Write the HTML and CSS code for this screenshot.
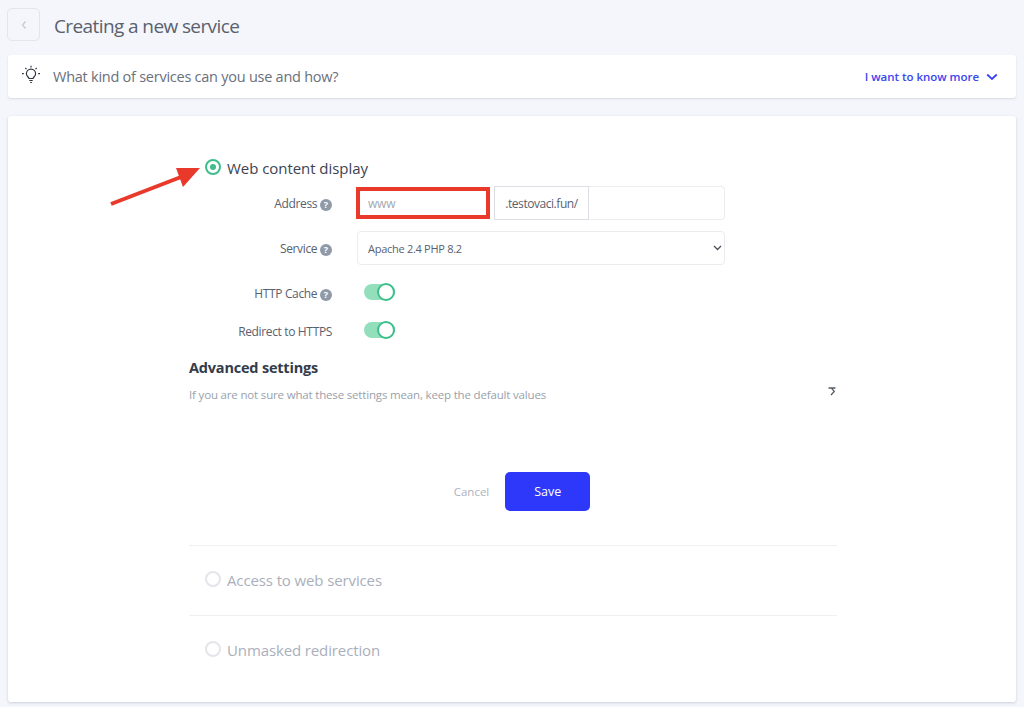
FILE: index.html
```html
<!DOCTYPE html>
<html lang="en">
<head>
<meta charset="utf-8">
<title>Creating a new service</title>
<link rel="stylesheet" href="styles.css">
</head>
<body>
<header class="page-head">
  <button class="back" aria-label="Back"><svg width="8" height="10" viewBox="0 0 8 10"><path d="M5.500 1.500 2.500 5l3 3.500" fill="none" stroke="#c3c8d2" stroke-width="1.2"/></svg></button>
  <h1>Creating a new service</h1>
</header>
<section class="info">
  <svg class="bulb" width="20" height="20" viewBox="0 0 20 20" fill="none" stroke="#2f353e" stroke-width="1.2"><path d="M8 13.500c-.2-1.300-2.600-2.200-2.600-4.800a4.600 4.600 0 0 1 9.200 0c0 2.600-2.400 3.500-2.600 4.800z"/><path d="M8.300 15.500h3.400M9.200 17.500h1.600M10 .8v1.700M2.800 8.700H1M19 8.700h-1.800M4.300 3l1.200 1.200M15.700 3l-1.200 1.200"/></svg>
  <span class="info-text">What kind of services can you use and how?</span>
  <a class="more">I want to know more<svg width="12" height="8" viewBox="0 0 12 8"><path d="M1.200 1.500 6 6l4.800-4.500" fill="none" stroke="#3a45f0" stroke-width="1.8"/></svg></a>
</section>
<main class="card">
  <div class="form-wrap">
    <div class="option active"><span class="radio on"></span><span>Web content display</span></div>
    <div class="row row-address">
      <label class="lab">Address <i class="q">?</i></label>
      <div class="group">
        <input class="inp inp-www" placeholder="www">
        <span class="domain">.testovaci.fun/</span>
        <input class="inp inp-path">
      </div>
    </div>
    <div class="row row-service">
      <label class="lab">Service <i class="q">?</i></label>
      <div class="sel-wrap">
        <select class="sel"><option>Apache 2.4 PHP 8.2</option></select>
        <svg class="sel-arrow" width="9" height="6" viewBox="0 0 9 6"><path d="M1 1l3.500 3.500L8 1" fill="none" stroke="#4a505a" stroke-width="1.300"/></svg>
      </div>
    </div>
    <div class="row row-toggle">
      <label class="lab">HTTP Cache <i class="q">?</i></label>
      <span class="toggle"><span class="knob"></span></span>
    </div>
    <div class="row row-toggle2">
      <label class="lab">Redirect to HTTPS</label>
      <span class="toggle"><span class="knob"></span></span>
    </div>
    <div class="adv">
      <div>
        <h2>Advanced settings</h2>
        <p>If you are not sure what these settings mean, keep the default values</p>
      </div>
      <svg class="chev" width="8" height="9" viewBox="0 0 8 9"><path d="M.5 1h7M3.500 1.200 6.300 4.500 3 8" fill="none" stroke="#555b66" stroke-width="1.300"/></svg>
    </div>
    <div class="actions">
      <a class="cancel">Cancel</a>
      <button class="save">Save</button>
    </div>
    <div class="option off first"><span class="radio"></span><span>Access to web services</span></div>
    <div class="option off"><span class="radio"></span><span>Unmasked redirection</span></div>
  </div>
</main>
<svg class="arrow" width="92" height="44" viewBox="0 0 92 44"><path d="M2 41 72 14" stroke="#e8392b" stroke-width="4" fill="none"/><path d="M91 5 67 5 74 24Z" fill="#e8392b"/></svg>
</body>
</html>
```
FILE: styles.css
```css
* { box-sizing: border-box; }
html, body { margin: 0; height: 707px; overflow: hidden; }
body {
  background: #f5f6fb;
  font-family: "Open Sans", "Noto Sans", sans-serif;
  color: #3b4452;
  padding: 8px 8px 0 7px;
  position: relative;
}
.page-head { display: flex; align-items: center; height: 33px; gap: 14px; }
.back {
  width: 33px; height: 33px; padding: 0;
  display: flex; align-items: center; justify-content: center;
  background: #f5f6fb; border: 1px solid #e3e5ec; border-radius: 5px;
}
h1 { margin: 2px 0 0; font-size: 19px; font-weight: 400; color: #59616e; letter-spacing: -0.6px; }
.info {
  margin: 14px 0 0 1px; height: 43px; padding: 0 18px 0 13px;
  display: flex; align-items: center;
  background: #fff; border-radius: 3px; box-shadow: 0 1px 2px rgba(60,70,100,.16);
}
.bulb { margin-top: -4px; }
.info-text { margin-left: 12px; font-size: 14.500px; color: #69707c; flex: 1; letter-spacing: -0.25px; }
.more { display: flex; align-items: center; gap: 7px; font-size: 11.500px; font-weight: 600; color: #3a45f0; letter-spacing: -0.03px; }
.card {
  margin: 18px 0 0 1px; height: 586px;
  background: #fff; border-radius: 3px; box-shadow: 0 1px 3px rgba(60,70,100,.22);
  padding-left: 181px;
}
.form-wrap { width: 648px; }
.option { display: flex; align-items: center; gap: 6px; padding-left: 16px; padding-bottom: 2px; font-size: 15px; letter-spacing: -0.05px; }
.option.active { padding-top: 39px; height: 64px; padding-bottom: 0; }
.option.off { height: 70px; color: #aab0bb; border-top: 1px solid #eff0f4; letter-spacing: -0.12px; }
.option.first { margin-top: 34px; }
.radio { width: 16px; height: 16px; border-radius: 50%; border: 2px solid #e3e5ea; background: #fff; position: relative; top: -1px; }
.radio.on { border-color: #3fbe8c; }
.radio.on::after { content: ""; position: absolute; left: 3px; top: 3px; width: 6px; height: 6px; border-radius: 50%; background: #3fbe8c; }
.row { display: flex; align-items: center; }
.lab { width: 143px; text-align: right; font-size: 12px; letter-spacing: -0.35px; color: #59616e; margin-right: 25px; white-space: nowrap; }
.row-address { height: 34px; margin-top: 6px; }
.row-service { height: 34px; margin-top: 11px; }
.row-toggle { height: 22px; margin-top: 17px; }
.row-toggle2 { height: 22px; margin-top: 16px; }
.q {
  display: inline-block; width: 12px; height: 12px; border-radius: 50%;
  background: #8f9aa8; color: #fff; font: 700 9px/12px "Open Sans", sans-serif; text-align: center;
  letter-spacing: 0;
}
.group { display: flex; width: 368px; height: 34px; }
.inp { height: 34px; border: 1px solid #ebecf0; background: #fff; font: 12px "Open Sans", sans-serif; padding: 0 10px; outline: none; }
.inp::placeholder { color: #a3a8b2; }
.inp-www { width: 134px; height: 32px; margin-top: 1px; margin-left: -1px; border: 4px solid #e8392b; padding: 0 8px; letter-spacing: -0.2px; }
.domain {
  width: 95px; margin-left: 4px; border: 1px solid #dcdee3; background: #fff;
  display: flex; align-items: center; justify-content: center; font-size: 12px; color: #59616e; letter-spacing: -0.45px;
}
.inp-path { flex: 1; min-width: 0; border-left: 0; border-radius: 0 4px 4px 0; }
.sel-wrap { position: relative; width: 368px; height: 34px; }
.sel {
  appearance: none; width: 100%; height: 34px; border: 1px solid #ebecf0; border-radius: 4px; background: #fff;
  font: 11px "Open Sans", sans-serif; letter-spacing: -0.28px; color: #59616e; padding: 0 10px; outline: none;
}
.sel-arrow { position: absolute; right: 3px; top: 14px; }
.toggle { width: 31px; height: 16px; border-radius: 8px; background: #93dfbb; position: relative; margin-left: 7px; display: block; top: -1px; }
.knob { position: absolute; right: 0; top: -1px; width: 18px; height: 18px; border-radius: 50%; background: #fff; border: 2px solid #3fbe8c; }
.adv { display: flex; justify-content: space-between; align-items: flex-start; padding-top: 16px; height: 73px; }
h2 { margin: 0; font-size: 14.500px; font-weight: 700; color: #333c4a; letter-spacing: -0.2px; }
.adv p { margin: 10px 0 0; font-size: 11.500px; letter-spacing: -0.17px; color: #9aa1ac; }
.chev { margin-top: 29px; margin-right: 1px; }
.actions { display: flex; justify-content: center; align-items: center; gap: 16px; margin-top: 57px; padding-left: 18px; }
.cancel { font-size: 11.500px; color: #aeb3bd; }
.save {
  width: 85px; height: 39px; border: 0; border-radius: 5px; background: #2e38fb;
  color: #fff; font: 500 12.500px "Open Sans", sans-serif;
}
.arrow { position: absolute; left: 109px; top: 163px; }
```
